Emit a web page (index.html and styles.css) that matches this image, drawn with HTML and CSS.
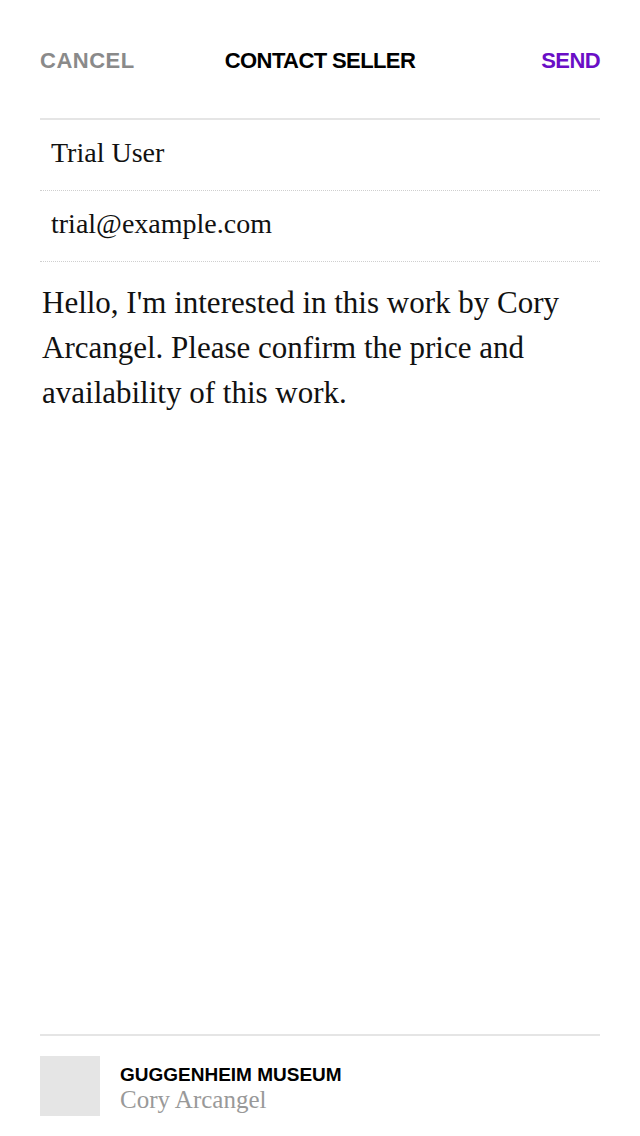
FILE: index.html
```html
<!DOCTYPE html>
<html>
<head>
<meta charset="utf-8">
<link rel="stylesheet" href="styles.css">
</head>
<body>
<div class="screen">
  <header class="nav">
    <span class="nav-btn cancel">CANCEL</span>
    <span class="nav-title">CONTACT SELLER</span>
    <span class="nav-btn send">SEND</span>
  </header>
  <div class="fields">
    <div class="field">Trial User</div>
    <div class="field">trial@example.com</div>
  </div>
  <div class="message">Hello, I'm interested in this work by Cory Arcangel. Please confirm the price and availability of this work.</div>
  <footer class="artwork">
    <div class="thumb"></div>
    <div class="art-info">
      <div class="partner">GUGGENHEIM MUSEUM</div>
      <div class="artist">Cory Arcangel</div>
    </div>
  </footer>
</div>
</body>
</html>
```
FILE: styles.css
```css
* { box-sizing: border-box; }
html, body { margin: 0; padding: 0; background: #fff; }
.screen {
  width: 640px;
  height: 1136px;
  padding: 0 40px;
  display: flex;
  flex-direction: column;
}
.nav {
  height: 120px;
  display: grid;
  grid-template-columns: 1fr auto 1fr;
  align-items: center;
  border-bottom: 2px solid #e5e5e5;
  padding-top: 4px;
  font-family: "Liberation Sans", Arial, sans-serif;
  font-weight: bold;
  font-size: 22px;
  letter-spacing: -0.6px;
}
.cancel { color: #8a8a8a; justify-self: start; letter-spacing: 0.5px; }
.nav-title { color: #000; }
.send { color: #6a0ec6; justify-self: end; }
.field {
  height: 71px;
  display: flex;
  align-items: center;
  padding-left: 11px;
  padding-bottom: 4px;
  border-bottom: 1px dotted #cfcfcf;
  font-family: "Liberation Serif", "Times New Roman", serif;
  font-size: 28px;
  color: #111;
}
.message {
  flex: 1;
  padding: 18px 0 0 2px;
  font-family: "Liberation Serif", "Times New Roman", serif;
  font-size: 31px;
  line-height: 45px;
  color: #111;
}
.artwork {
  border-top: 2px solid #e5e5e5;
  padding: 20px 0 20px;
  display: flex;
  align-items: center;
  gap: 20px;
}
.thumb {
  width: 60px;
  height: 60px;
  background: #e5e5e5;
}
.art-info { padding-top: 6px; }
.partner {
  font-family: "Liberation Sans", Arial, sans-serif;
  font-weight: bold;
  font-size: 19px;
  letter-spacing: 0;
  line-height: 22px;
  color: #000;
}
.artist {
  font-family: "Liberation Serif", "Times New Roman", serif;
  font-size: 25px;
  line-height: 28px;
  color: #999;
}
```
